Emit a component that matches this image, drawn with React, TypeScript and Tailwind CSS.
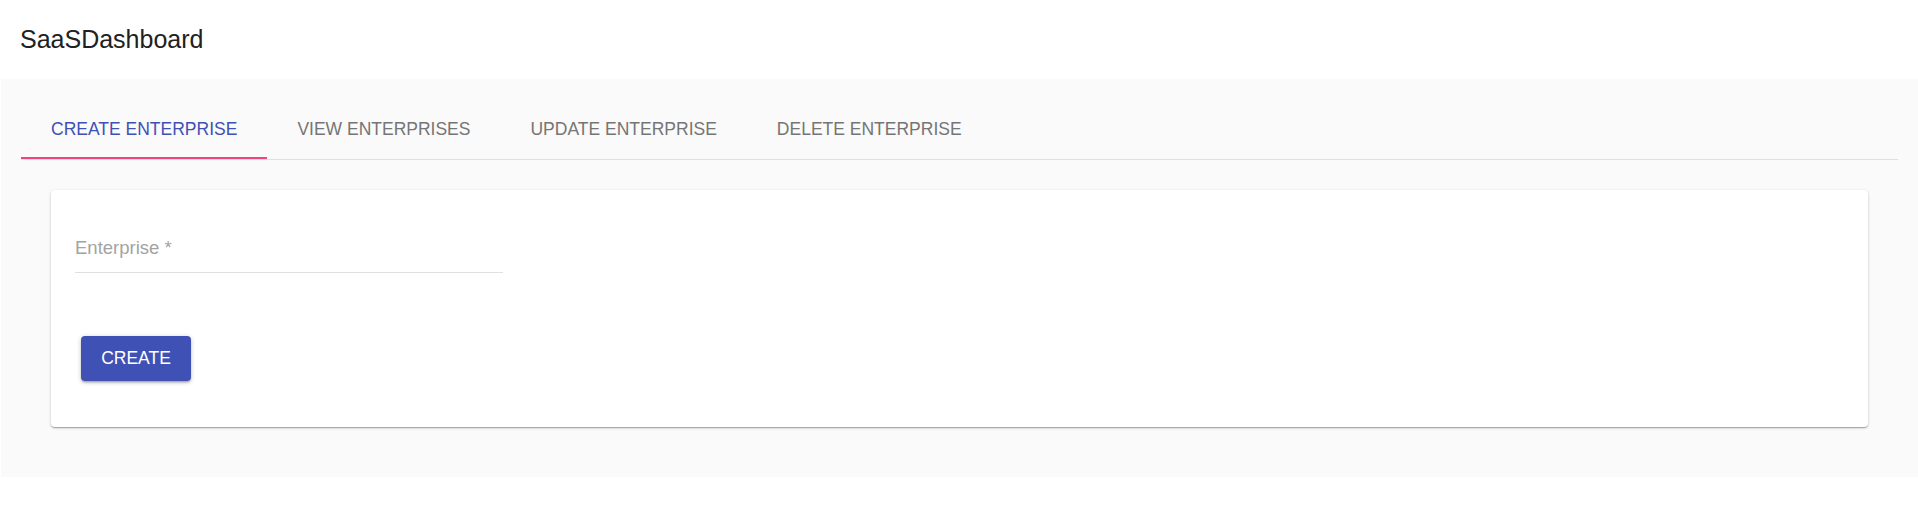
import { useState } from "react";

const tabs = [
  "CREATE ENTERPRISE",
  "VIEW ENTERPRISES",
  "UPDATE ENTERPRISE",
  "DELETE ENTERPRISE",
];

export default function App() {
  const [active, setActive] = useState(0);
  const [name, setName] = useState("");

  return (
    <div className="min-h-[520px] bg-white [font-family:'Liberation_Sans',Arial,sans-serif]">
      <header className="h-[79px] flex items-center pl-[20px] text-[25px] leading-[29px] text-[#212121]">
        SaaSDashboard
      </header>

      <main className="ml-px bg-[#fafafa] pt-[20px] pb-[50px]">
        <div className="mx-[20px] flex border-b border-[#e0e0e0]">
          {tabs.map((t, i) => (
            <button
              key={t}
              onClick={() => setActive(i)}
              className={
                "relative h-[60px] px-[30px] flex items-center text-[17.5px] " +
                (i === active ? "text-[#3f51b5]" : "text-[#757575]")
              }
            >
              {t}
              {i === active && (
                <span className="absolute left-0 right-0 bottom-0 h-[2px] bg-[#f2447c]" />
              )}
            </button>
          ))}
        </div>

        <section className="mx-[50px] mt-[30px] bg-white rounded px-[24px] pt-[47px] pb-[46px] shadow-[0_1px_3px_rgba(0,0,0,0.2),0_1px_1px_rgba(0,0,0,0.14),0_2px_1px_-1px_rgba(0,0,0,0.12)]">
          <label className="block w-[428px] border-b border-[#e0e0e0] pb-[13px]">
            <input
              value={name}
              onChange={(e) => setName(e.target.value)}
              placeholder="Enterprise *"
              className="block w-full text-[18.5px] leading-[22px] text-[#212121] placeholder:text-[#a3a3a3] outline-none bg-transparent"
            />
          </label>

          <button className="ml-[6px] mt-[63px] w-[110px] h-[45px] flex items-center justify-center rounded bg-[#3f51b5] text-white text-[17.5px] shadow-[0_1px_5px_rgba(0,0,0,0.2),0_2px_2px_rgba(0,0,0,0.14),0_3px_1px_-2px_rgba(0,0,0,0.12)]">
            CREATE
          </button>
        </section>
      </main>
    </div>
  );
}
